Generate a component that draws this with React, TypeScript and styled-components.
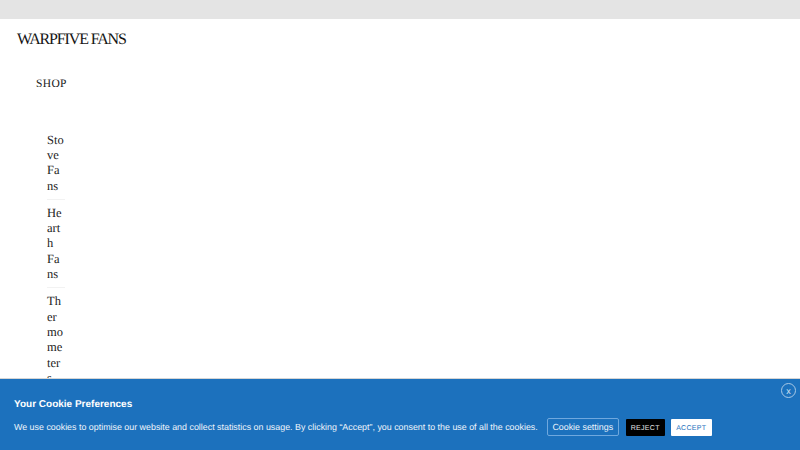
import { createGlobalStyle } from "styled-components";
import styled from "styled-components";

const GlobalStyle = createGlobalStyle`
  html, body {
    margin: 0;
    padding: 0;
    height: 100%;
    overflow: hidden;
    background: #fff;
    text-rendering: geometricPrecision;
  }
`;

const menuItems = [
  { label: "Stove Fans" },
  { label: "Hearth Fans" },
  { label: "Thermometers" },
];

function App() {
  return (
    <Page>
      <GlobalStyle />
      <TopBar />
      <Logo>WARPFIVE FANS</Logo>
      <Nav>
        <NavTitle>SHOP</NavTitle>
        <SubMenu>
          {menuItems.map((item) => (
            <SubItem key={item.label}>{item.label}</SubItem>
          ))}
        </SubMenu>
      </Nav>
      <CookieBanner>
        <CloseButton>x</CloseButton>
        <CookieTitle>Your Cookie Preferences</CookieTitle>
        <CookieRow>
          <CookieText>
            We use cookies to optimise our website and collect statistics on
            usage. By clicking “Accept”, you consent to the use of all the
            cookies.
          </CookieText>
          <SettingsButton>Cookie settings</SettingsButton>
          <RejectButton>REJECT</RejectButton>
          <AcceptButton>ACCEPT</AcceptButton>
        </CookieRow>
      </CookieBanner>
    </Page>
  );
}

export default App;

const Page = styled.div`
  position: relative;
  width: 800px;
  height: 450px;
  overflow: hidden;
  background: #fff;
`;

const TopBar = styled.div`
  height: 19px;
  background: #e4e4e4;
`;

const Logo = styled.div`
  margin: 11px 0 0 17px;
  font-family: "Liberation Serif", serif;
  font-size: 16px;
  line-height: 20px;
  letter-spacing: -1.15px;
  color: #151515;
  white-space: nowrap;
`;

const Nav = styled.nav`
  padding: 25px 0 0 36px;
`;

const NavTitle = styled.div`
  font-family: "Liberation Serif", serif;
  font-size: 11.5px;
  line-height: 18px;
  letter-spacing: 0.35px;
  color: #222;
`;

const SubMenu = styled.ul`
  list-style: none;
  width: 17.5px;
  margin: 38.5px 0 0 11px;
  padding: 0;
`;

const SubItem = styled.li`
  font-family: "Liberation Serif", serif;
  font-size: 12.5px;
  line-height: 15.4px;
  color: #222;
  overflow-wrap: break-word;
  padding: 1px 0 4.5px;
  margin-bottom: 5px;
  border-bottom: 1px solid #f2f2f2;
`;

const CookieBanner = styled.div`
  position: absolute;
  left: 0;
  right: 0;
  bottom: 0;
  height: 72px;
  padding: 0 14px;
  box-sizing: border-box;
  background: #1c71bd;
  border-top: 1px solid #d5d5d5;
  font-family: "Liberation Sans", sans-serif;
  color: #fff;
`;

const CloseButton = styled.div`
  position: absolute;
  top: 4px;
  right: 4px;
  width: 13px;
  height: 13px;
  display: flex;
  align-items: center;
  justify-content: center;
  border: 1px solid #a9c9e6;
  border-radius: 50%;
  font-size: 9px;
  color: #d5e5f4;
`;

const CookieTitle = styled.div`
  margin-top: 18px;
  font-size: 10px;
  line-height: 15px;
  font-weight: 700;
`;

const CookieRow = styled.div`
  display: flex;
  align-items: center;
  height: 18px;
  margin-top: 6px;
`;

const CookieText = styled.div`
  font-size: 8.9px;
  line-height: 18px;
  white-space: nowrap;
  color: #eef4fb;
`;

const SettingsButton = styled.div`
  margin-left: 9px;
  width: 72px;
  height: 18px;
  box-sizing: border-box;
  display: flex;
  align-items: center;
  justify-content: center;
  border: 1px solid #6fa8de;
  border-radius: 2px;
  font-size: 8.9px;
  white-space: nowrap;
  color: #eef4fb;
`;

const RejectButton = styled.div`
  margin-left: 7px;
  width: 39px;
  height: 17px;
  padding-top: 2px;
  box-sizing: border-box;
  display: flex;
  align-items: center;
  justify-content: center;
  background: #000;
  border-radius: 1px;
  font-size: 7px;
  letter-spacing: 0.3px;
  color: #e8e8e8;
`;

const AcceptButton = styled(RejectButton)`
  margin-left: 6px;
  width: 41px;
  background: #fff;
  color: #1c71bd;
`;
